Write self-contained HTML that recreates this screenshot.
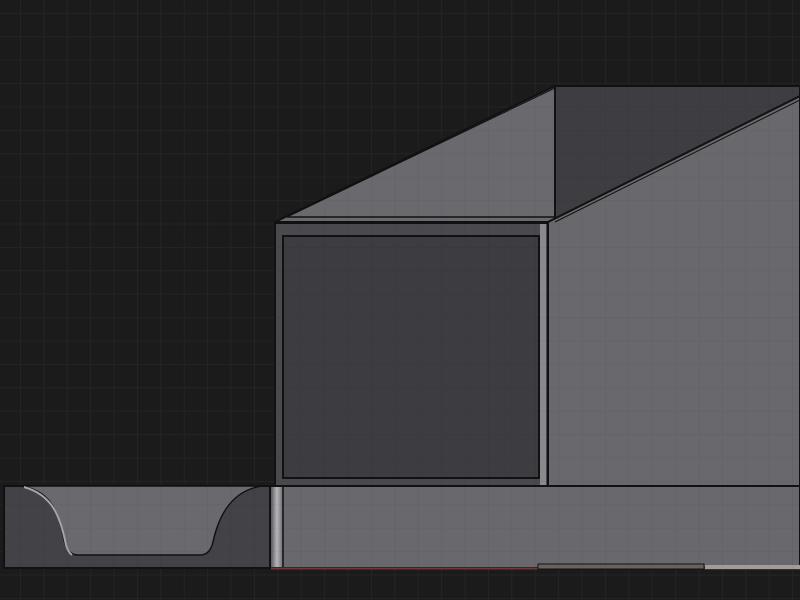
<!DOCTYPE html>
<html><head><style>html,body{margin:0;padding:0;background:#1b1b1b;width:800px;height:600px;overflow:hidden}</style></head>
<body>
<svg width="800" height="600" viewBox="0 0 800 600" xmlns="http://www.w3.org/2000/svg">
<defs>
<pattern id="g" width="23.4" height="23.4" patternUnits="userSpaceOnUse" x="-3.4" y="-10.4">
<path d="M0 0H23.4M0 0V23.4" stroke="#282828" stroke-width="1.5" fill="none"/>
</pattern>
<pattern id="g2" width="23.4" height="23.4" patternUnits="userSpaceOnUse" x="-3.4" y="-10.4">
<path d="M0 0H23.4M0 0V23.4" stroke="#000" stroke-opacity="0.05" stroke-width="1.5" fill="none"/>
</pattern>
<linearGradient id="edge" x1="0" x2="1"><stop offset="0" stop-color="#5a595e"/><stop offset="0.5" stop-color="#b8b7bb"/><stop offset="1" stop-color="#6a696e"/></linearGradient>
</defs>
<rect width="800" height="600" fill="#1b1b1b"/>
<rect width="800" height="600" fill="url(#g)"/>
<polygon points="275,222 555,86 555,220 548,222" fill="#6a696e" stroke="#111" stroke-width="2"/>
<polygon points="555,86 800,86 800,98 555,220" fill="#3e3d42" stroke="#111" stroke-width="2"/>
<polygon points="548,222 800,96 800,486 548,486" fill="#69686d" stroke="#111" stroke-width="2"/>
<line x1="287" y1="217" x2="555" y2="217" stroke="#111" stroke-width="1.5"/>
<line x1="287" y1="217" x2="555" y2="88" stroke="#111" stroke-width="1"/>
<line x1="555" y1="222" x2="800" y2="100" stroke="#111" stroke-width="1"/>
<rect x="275" y="223" width="273" height="263" fill="#4a494e" stroke="#111" stroke-width="2"/>
<rect x="540" y="224" width="6" height="262" fill="#8a898e"/>
<rect x="283" y="236" width="256" height="242" fill="#3d3c41" stroke="#111" stroke-width="2"/>
<rect x="270" y="486" width="530" height="82" fill="#69686d" stroke="#111" stroke-width="2"/>
<rect x="271" y="487" width="12" height="80" fill="url(#edge)"/>
<line x1="283" y1="487" x2="283" y2="567" stroke="#111" stroke-width="1.5"/>
<line x1="271" y1="568.5" x2="800" y2="568.5" stroke="#6b3a36" stroke-width="2"/>
<rect x="538" y="564" width="166" height="5" fill="#6b6260" stroke="#111" stroke-width="1"/>
<rect x="705" y="565" width="95" height="4" fill="#a59a98"/>
<rect x="4" y="486" width="266" height="82" fill="#434247" stroke="#111" stroke-width="2"/>
<path d="M20 486 C50 490 58 510 64 540 Q67 555 78 555 L200 555 Q210 555 213 542 C220 510 235 490 262 486 Z" fill="#6a696e" stroke="#111" stroke-width="1.5"/>
<path d="M24 487 C52 495 60 515 66 545 Q68 552 72 555" fill="none" stroke="#a5a4a8" stroke-width="2"/>
<rect width="800" height="600" fill="url(#g2)"/>
</svg>
</body></html>
